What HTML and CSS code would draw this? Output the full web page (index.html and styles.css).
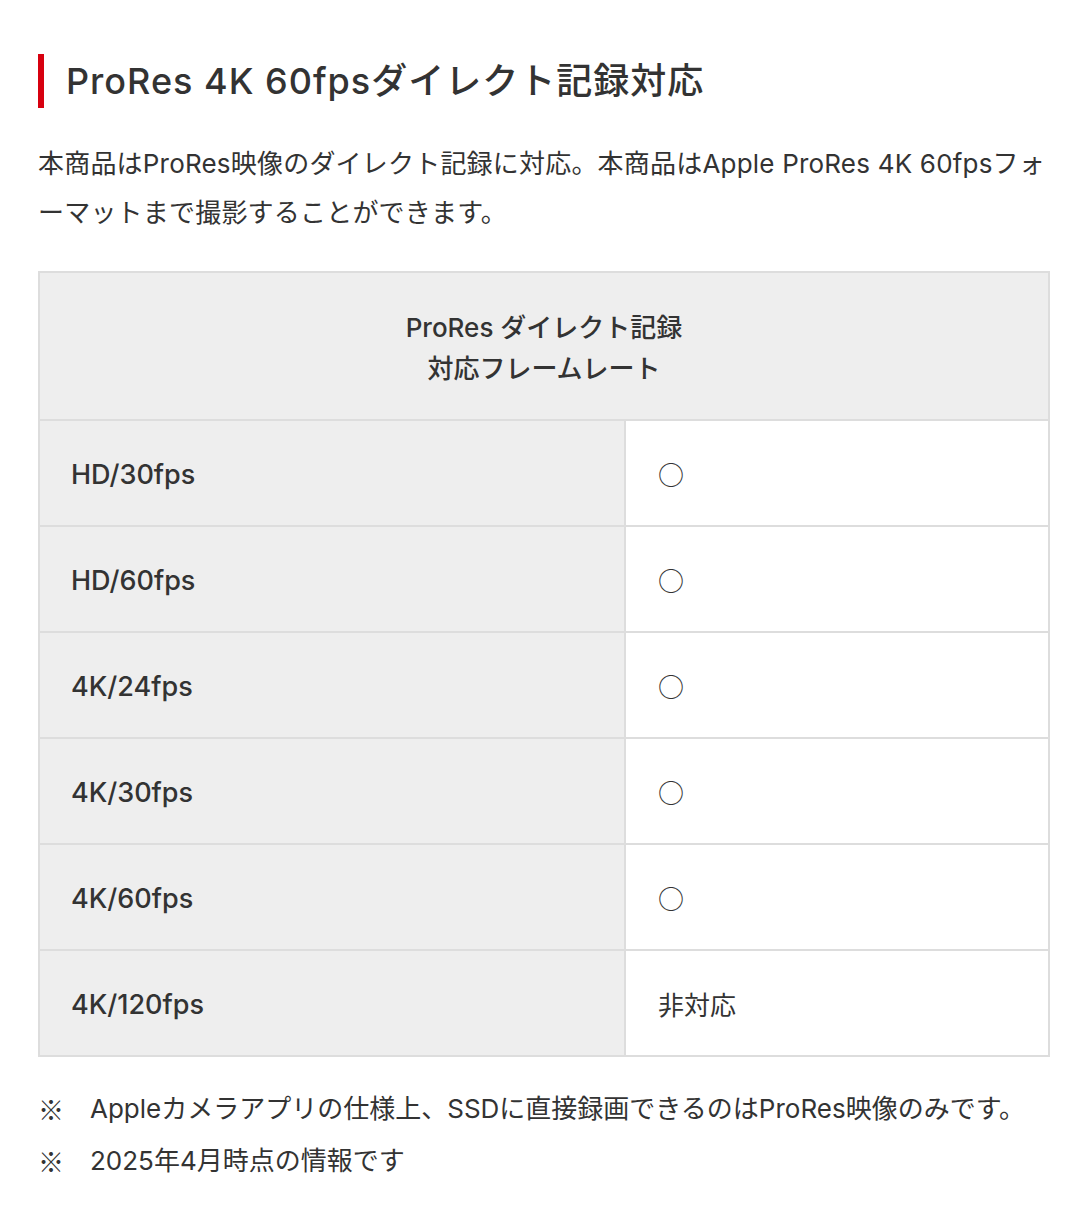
FILE: index.html
```html
<!DOCTYPE html>
<html lang="ja">
<head>
<meta charset="utf-8">
<link rel="stylesheet" href="styles.css">
</head>
<body>
<main class="page">
  <h2 class="heading">ProRes 4K 60fpsダイレクト記録対応</h2>
  <p class="lead">本商品はProRes映像のダイレクト記録に対応。本商品はApple ProRes 4K 60fpsフォーマットまで撮影することができます。</p>
  <table class="spec">
    <thead>
      <tr><th colspan="2" class="spec-head">ProRes ダイレクト記録<br>対応フレームレート</th></tr>
    </thead>
    <tbody>
      <tr><th class="label">HD/30fps</th><td class="value cjk">○</td></tr>
      <tr><th class="label">HD/60fps</th><td class="value cjk">○</td></tr>
      <tr><th class="label">4K/24fps</th><td class="value cjk">○</td></tr>
      <tr><th class="label">4K/30fps</th><td class="value cjk">○</td></tr>
      <tr><th class="label">4K/60fps</th><td class="value cjk">○</td></tr>
      <tr><th class="label">4K/120fps</th><td class="value">非対応</td></tr>
    </tbody>
  </table>
  <ul class="notes">
    <li><span class="mark cjk">※</span><span>Appleカメラアプリの仕様上、SSDに直接録画できるのはProRes映像のみです。</span></li>
    <li><span class="mark cjk">※</span><span>2025年4月時点の情報です</span></li>
  </ul>
</main>
</body>
</html>
```

FILE: styles.css
```css
* { box-sizing: border-box; }
html, body { margin: 0; padding: 0; background: #fff; }
body {
  font-family: Inter, "Noto Sans CJK JP", sans-serif;
  color: #333;
}
.cjk {
  font-family: "Noto Sans CJK JP", sans-serif;
}
.page {
  padding: 54px 30px 40px 38px;
}
.heading {
  margin: 0;
  border-left: 6px solid #d7000f;
  padding-left: 22px;
  font-size: 36px;
  font-weight: 500;
  letter-spacing: 1px;
  line-height: 54px;
  color: #333;
}
.lead {
  margin: 31px 0 0;
  font-size: 26px;
  line-height: 49px;
  font-weight: 400;
  letter-spacing: 0.2px;
}
.spec {
  margin-top: 34px;
  width: 100%;
  border-collapse: collapse;
  border: 2px solid #ddd;
}
.spec th, .spec td {
  border: 2px solid #ddd;
}
.spec-head {
  background: #eee;
  text-align: center;
  font-size: 26px;
  font-weight: 500;
  line-height: 41px;
  height: 148px;
  padding: 3px 0 0;
}
.label {
  width: 586px;
  background: #eee;
  text-align: left;
  font-size: 27px;
  font-weight: 500;
  height: 106px;
  padding: 2px 0 0 31px;
}
.value {
  background: #fff;
  font-size: 26px;
  font-weight: 400;
  padding: 0 0 0 32px;
}
.notes {
  list-style: none;
  margin: 26px 0 0;
  padding: 0;
  font-size: 26px;
  line-height: 52px;
}
.notes li {
  display: flex;
}
.mark {
  width: 52px;
  flex: none;
}
```
